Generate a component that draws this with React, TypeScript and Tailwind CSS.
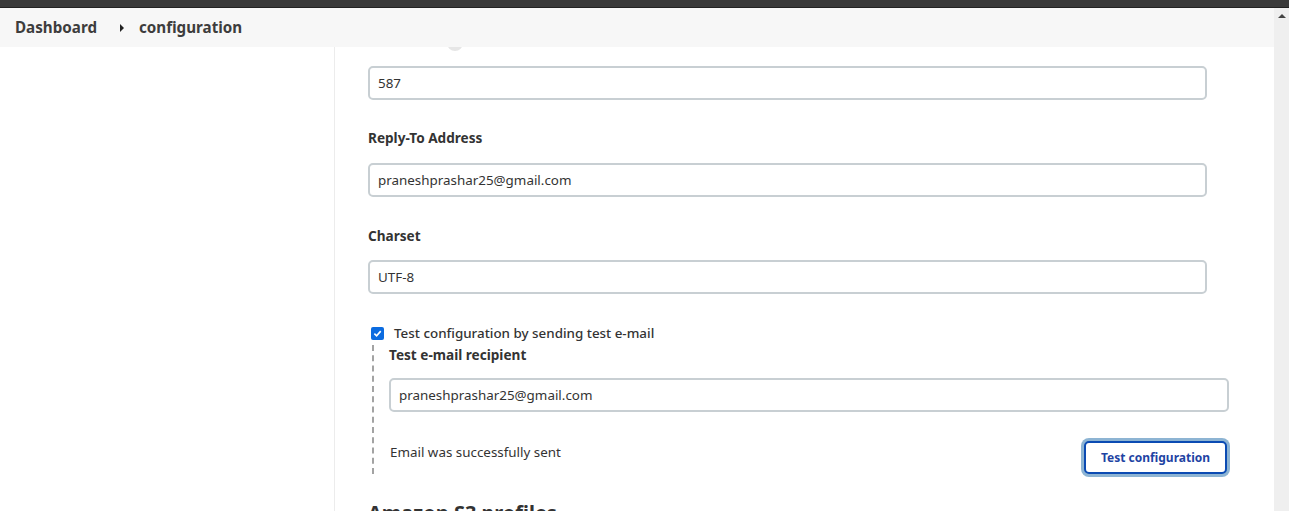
import React from 'react';

const font = { fontFamily: '"Noto Sans", "Open Sans", sans-serif' };

function Field({ value, wide }: { value: string; wide?: boolean }) {
    return (
        <div
            className={`h-[34px] rounded-[5px] border-2 border-[#c8cfd3] bg-white px-[8px] flex items-center text-[13.4px] text-[#333] ${
                wide ? 'w-full' : 'w-[839px]'
            }`}
        >
            {value}
        </div>
    );
}

function Label({ children }: { children: React.ReactNode }) {
    return <div className="h-[20px] leading-[20px] text-[13.6px] font-bold text-[#333]">{children}</div>;
}

export default function App() {
    return (
        <div className="h-[511px] w-[1289px] overflow-hidden flex flex-col bg-white" style={font}>
            <div className="h-[8px] bg-[#3a3a3a] border-b border-[#222] shrink-0" />
            <div className="flex flex-1 min-h-0">
                <div className="flex-1 flex flex-col min-w-0">
                    <div className="h-[39px] bg-[#f7f7f7] flex items-center pl-[15px] shrink-0 text-[15.2px] font-bold text-[#3d3d3d]">
                        <span>Dashboard</span>
                        <span className="ml-[23px] mr-[15px] w-0 h-0 border-y-[4px] border-y-transparent border-l-[4px] border-l-[#222]" />
                        <span>configuration</span>
                    </div>
                    <div className="flex flex-1 min-h-0">
                        <div className="w-[335px] border-r border-[#ececec] shrink-0" />
                        <div className="flex-1 pl-[33px]">
                            <div className="w-[861px]">
                                <div className="h-[4px] overflow-hidden ml-[79px]">
                                    <div className="w-[16px] h-[16px] rounded-full bg-[#e6e6e6] -mt-[12px]" />
                                </div>
                                <div className="mt-[15px]">
                                    <Field value="587" />
                                </div>
                                <div className="mt-[28px]">
                                    <Label>Reply-To Address</Label>
                                </div>
                                <div className="mt-[15px]">
                                    <Field value="praneshprashar25@gmail.com" />
                                </div>
                                <div className="mt-[29px]">
                                    <Label>Charset</Label>
                                </div>
                                <div className="mt-[14px]">
                                    <Field value="UTF-8" />
                                </div>
                                <div className="mt-[29px] h-[20px] flex items-center pl-[3px]">
                                    <span className="w-[13px] h-[13px] rounded-[2px] bg-[#0b6be0] flex items-center justify-center">
                                        <svg width="9" height="9" viewBox="0 0 10 10">
                                            <path d="M1.5 5.2 L4 7.6 L8.6 2.4" fill="none" stroke="white" strokeWidth="1.8" />
                                        </svg>
                                    </span>
                                    <span className="ml-[10px] text-[13.4px] font-medium text-[#333]">
                                        Test configuration by sending test e-mail
                                    </span>
                                </div>
                                <div className="ml-[4px] mt-[2px] border-l-2 border-dashed border-[#a3a3a3] pl-[15px]">
                                    <Label>Test e-mail recipient</Label>
                                    <div className="mt-[13px]">
                                        <Field value="praneshprashar25@gmail.com" wide />
                                    </div>
                                    <div className="mt-[28px] flex items-start justify-between">
                                        <div className="mt-[2px] h-[20px] leading-[20px] text-[13.4px] text-[#333] pl-[1px]">
                                            Email was successfully sent
                                        </div>
                                        <button className="mr-[2px] h-[33px] w-[143px] rounded-[5px] border-2 border-[#0b4bb3] ring-[3px] ring-[#8db4d3] bg-white text-[12px] font-bold text-[#1e43a3] mt-[1px]">
                                            Test configuration
                                        </button>
                                    </div>
                                </div>
                                <div className="mt-[26px] text-[20px] font-bold text-[#333] leading-[26px]">Amazon S3 profiles</div>
                            </div>
                        </div>
                    </div>
                </div>
                <div className="w-[15px] bg-[#efefef] shrink-0 flex flex-col items-center pt-[6px]">
                    <span className="w-0 h-0 border-x-[4px] border-x-transparent border-b-[4px] border-b-[#444]" />
                </div>
            </div>
        </div>
    );
}
